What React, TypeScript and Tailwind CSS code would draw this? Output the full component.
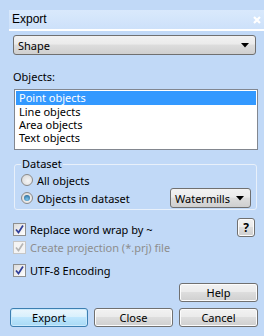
import React from "react";

// classic Win7 dialog bits
function Arrow() {
  return (
    <svg width="8" height="5" viewBox="0 0 8 5" className="shrink-0">
      <path d="M0 0 H8 L4 4.5 Z" fill="#000" />
    </svg>
  );
}

function Btn({ label, primary = false, className = "" }: { label: string; primary?: boolean; className?: string }) {
  return (
    <div
      className={`flex items-center justify-center rounded-[3px] border h-[19px] text-black ${
        primary
          ? "border-[#3c7fb1] bg-[linear-gradient(#eaf6fd_0%,#d9f0fc_45%,#bee6fd_50%,#a7d9f5_100%)] shadow-[inset_0_0_0_1px_#cbeafc]"
          : "border-[#707070] bg-[linear-gradient(#f2f2f2_0%,#ebebeb_45%,#dddddd_50%,#cfcfcf_100%)] shadow-[inset_0_0_0_1px_#fcfcfc]"
      } ${className}`}
    >
      {label}
    </div>
  );
}

function Check({ label, disabled = false, className = "" }: { label: string; disabled?: boolean; className?: string }) {
  return (
    <div className={`flex items-center h-[16px] ${className}`}>
      <div
        className={`w-[13px] h-[13px] border flex items-center justify-center ${
          disabled ? "border-[#c6c6c6] bg-[#f4f4f4]" : "border-[#8e8f8f] bg-[linear-gradient(135deg,#dcdcdc,#ffffff)]"
        }`}
      >
        <svg width="11" height="11" viewBox="0 0 11 11">
          <path
            d="M2 5.5 L4.5 8.5 L9 1.5"
            fill="none"
            stroke={disabled ? "#b5b5b5" : "#2f3f9a"}
            strokeWidth="1.7"
          />
        </svg>
      </div>
      <span className={`ml-[4px] ${disabled ? "text-[#8d8d8d]" : "text-black"}`}>{label}</span>
    </div>
  );
}

function Radio({ label, on = false }: { label: string; on?: boolean }) {
  return (
    <div className="flex items-center h-[18px]">
      <div className="w-[12px] h-[12px] rounded-full border border-[#8a8a8a] bg-[radial-gradient(circle_at_60%_60%,#f6f6f6,#d4d4d4)] flex items-center justify-center">
        {on && <div className="w-[6px] h-[6px] rounded-full bg-[radial-gradient(circle_at_50%_70%,#7ac6ee,#1c5a8a)]" />}
      </div>
      <span className="ml-[4px]">{label}</span>
    </div>
  );
}

const objectTypes = ["Point objects", "Line objects", "Area objects", "Text objects"];

export default function App() {
  return (
    <div className="w-[264px] h-[336px] bg-[#c1d9f7] pt-[10px] text-[11px] text-black font-['Noto_Sans',sans-serif] leading-[15px] overflow-hidden">
      {/* title bar */}
      <div className="ml-[9px] h-[19px] bg-[linear-gradient(#d9e9fc,#cde1fa)] flex items-center justify-between pl-[3px] pr-[3px]">
        <span className="font-['Liberation_Sans',sans-serif] text-[12px]">Export</span>
        <svg width="8" height="8" viewBox="0 0 8 8">
          <path d="M1 1 L7 7 M7 1 L1 7" stroke="#fff" strokeWidth="2.2" />
        </svg>
      </div>
      <div className="ml-[9px] h-[2px] bg-white" />

      {/* format combo */}
      <div className="ml-[13px] mt-[4px] w-[243px] h-[20px] rounded-[3px] border border-[#707070] bg-[linear-gradient(#f2f2f2_0%,#ebebeb_45%,#dddddd_50%,#cfcfcf_100%)] flex items-center justify-between pl-[4px] pr-[6px]">
        <span>Shape</span>
        <Arrow />
      </div>

      <div className="ml-[13px] mt-[14px]">Objects:</div>

      {/* object list */}
      <div className="ml-[14px] mt-[5px] w-[244px] h-[61px] border border-[#828790] bg-white p-[1px]">
        {objectTypes.map((t, i) => (
          <div
            key={t}
            className={`pl-[3px] ${i === 0 ? "bg-[#3399ff] text-white h-[14px] leading-[14px]" : "h-[13px] leading-[13px]"}`}
          >
            {t}
          </div>
        ))}
      </div>

      {/* dataset group */}
      <div className="relative ml-[14px] mt-[14px] w-[243px] h-[46px] border border-[#e8f0fa] rounded-[3px] pl-[6px] pr-[5px] pt-[6px]">
        <span className="absolute left-[6px] top-[-9px] bg-[#c1d9f7] px-[1px]">Dataset</span>
        <div className="flex items-end justify-between">
          <div className="flex flex-col">
            <Radio label="All objects" />
            <Radio label="Objects in dataset" on />
          </div>
          <div className="mb-[-1px] w-[81px] h-[20px] rounded-[3px] border border-[#707070] bg-[linear-gradient(#f2f2f2_0%,#ebebeb_45%,#dddddd_50%,#cfcfcf_100%)] flex items-center justify-between pl-[4px] pr-[6px]">
            <span>Watermills</span>
            <Arrow />
          </div>
        </div>
      </div>

      {/* options */}
      <div className="flex items-start justify-between ml-[13px] mr-[9px] mt-[8px]">
        <Check label="Replace word wrap by ~" className="mt-[3px]" />
        <Btn label="?" className="w-[18px] h-[18px] font-bold text-[12px]" />
      </div>
      <Check label="Create projection (*.prj) file" disabled className="ml-[13px] mt-[2px]" />
      <Check label="UTF-8 Encoding" className="ml-[13px] mt-[7px]" />

      {/* buttons */}
      <div className="flex justify-end mr-[6px] mt-[5px]">
        <Btn label="Help" className="w-[79px]" />
      </div>
      <div className="flex ml-[10px] mt-[6px] gap-[6px]">
        <Btn label="Export" primary className="w-[78px]" />
        <Btn label="Close" className="w-[79px]" />
        <Btn label="Cancel" className="w-[79px]" />
      </div>
    </div>
  );
}
